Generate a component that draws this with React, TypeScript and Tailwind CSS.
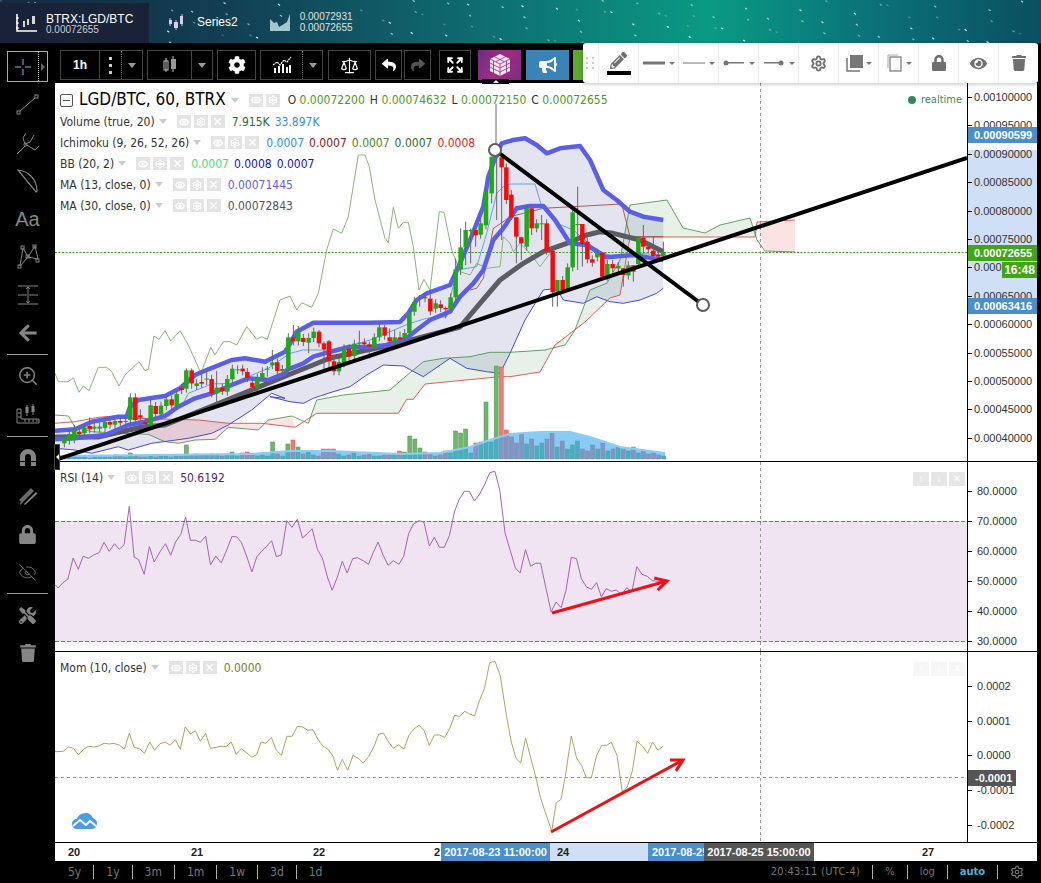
import { Eye, EyeOff, Expand, Scale, Settings, X, ZoomIn } from "lucide-react";
import { FaArrowLeft, FaBullhorn, FaCog, FaEye, FaLock, FaPencilAlt, FaReply, FaShare, FaTools, FaTrash } from "react-icons/fa";
import type { ReactNode } from "react";

type Pt = [number, number];

// points were read off crops of the chart, so convert them back to page pixels
const crop = (ox: number, oy: number, flat: number[], sx = 3, sy = 3): Pt[] => {
  const out: Pt[] = [];
  for (let i = 0; i < flat.length; i += 2) out.push([ox + flat[i] / sx, oy + flat[i + 1] / sy]);
  return out;
};
const line = (p: Pt[]) => p.map(([x, y]) => `${x.toFixed(1)},${y.toFixed(1)}`).join(" ");

// ─── Chart data ────────────────────────────────────────────────────────────

const bbUpper = [
  ...crop(55, 310, [0, 362, 60, 358, 110, 335, 190, 320, 215, 320, 225, 290, 250, 270, 330, 258, 375, 235, 420, 195, 460, 178, 530, 150, 570, 145, 630, 155, 690, 125]),
  ...crop(270, 150, [55, 590, 80, 545, 130, 518, 200, 518, 300, 518, 390, 516, 415, 490, 440, 450, 470, 430, 540, 405, 570, 340, 600, 270, 640, 170]),
  ...crop(400, 120, [265, 170, 285, 115, 305, 70, 340, 60, 375, 55, 410, 75, 440, 100, 480, 85, 540, 78, 570, 120, 610, 210, 650, 240, 690, 275, 730, 290, 790, 300]),
];
const bbLower = [
  ...crop(55, 340, [0, 325, 60, 330, 110, 340, 190, 320, 220, 330, 290, 310, 400, 295, 470, 280, 520, 255, 590, 210, 650, 160, 690, 175]),
  ...crop(270, 150, [0, 740, 60, 755, 100, 760, 130, 745, 180, 728, 240, 710, 290, 675, 340, 645, 400, 648, 460, 680, 540, 625, 590, 655, 650, 665, 690, 670, 720, 610]),
  ...crop(400, 120, [375, 600, 430, 510, 470, 505, 490, 540, 550, 550, 590, 530, 630, 545, 670, 550, 720, 540, 770, 520, 790, 505]),
];
const ma13 = [
  ...crop(55, 310, [0, 388, 60, 385, 150, 375, 220, 345, 270, 335, 330, 318, 370, 290, 420, 265, 470, 250, 530, 225, 580, 205, 640, 210, 690, 190]),
  ...crop(270, 150, [50, 660, 100, 640, 130, 620, 170, 608, 210, 598, 240, 590, 300, 592, 350, 585, 410, 565, 440, 540, 480, 510, 540, 485, 570, 440, 610, 400, 640, 360, 670, 270]),
  ...crop(400, 120, [310, 325, 350, 265, 390, 258, 430, 258, 465, 300, 510, 370, 560, 375, 620, 412, 700, 405, 790, 420]),
];
const ma30: Pt[] = [
  [55, 437], [98, 437], [142, 427], [165, 425], [222, 402], [293, 373], [313, 365], [330, 358], [400, 343], [460, 327],
  ...crop(400, 120, [240, 550, 300, 480, 370, 430, 430, 395, 500, 370, 560, 345, 600, 335, 640, 340, 720, 360, 790, 395]),
];
const spanA = [
  ...crop(55, 340, [0, 225, 40, 228, 60, 262, 110, 275, 200, 280, 280, 283, 330, 305, 370, 310, 420, 300, 480, 298, 520, 262, 610, 270, 640, 240, 710, 228, 760, 250]),
  ...crop(270, 150, [140, 750, 220, 735, 360, 720, 400, 685, 460, 635, 520, 625, 600, 620, 660, 607, 720, 607]),
  [545, 350], [565, 345], [575, 330], [590, 290], [607, 283], [620, 260], [630, 205], [667, 200], [683, 228], [705, 233], [720, 225], [750, 218], [757, 240], [765, 251], [795, 252],
] as Pt[];
const spanB = [
  ...crop(55, 340, [0, 250, 60, 245, 130, 232, 180, 228, 240, 235, 430, 240, 520, 250, 620, 250, 720, 262]),
  ...crop(270, 150, [140, 790, 385, 790, 410, 748, 430, 748, 465, 702, 640, 685, 690, 680, 720, 680]),
  [540, 372], [555, 345], [585, 322], [610, 298], [620, 295], [630, 237], [755, 237], [757, 222], [795, 220],
] as Pt[];
const kijun = [
  ...crop(270, 150, [600, 420, 620, 415, 640, 385, 670, 235, 690, 222]),
  ...crop(400, 120, [330, 290, 430, 265, 665, 252, 690, 350, 790, 350]),
];
const tenkan = [
  ...crop(55, 310, [340, 320, 385, 280, 400, 250, 470, 222, 530, 220, 580, 200, 640, 175]),
  ...crop(270, 150, [60, 610, 100, 600, 200, 600, 300, 570, 420, 520, 470, 505, 530, 500, 540, 450, 560, 360, 620, 350, 650, 250, 680, 130, 700, 110]),
  ...crop(400, 120, [330, 192, 405, 192, 425, 260, 470, 310, 520, 330, 590, 390, 640, 410, 720, 400, 790, 405]),
];
const lagging = [
  ...crop(55, 310, [0, 190, 10, 215, 40, 215, 55, 203, 72, 247, 85, 228, 102, 242, 130, 172, 155, 172, 170, 185, 192, 228, 210, 195, 252, 155, 270, 182, 280, 178, 297, 78, 312, 88, 330, 62, 347, 93, 375, 62, 400, 105, 438, 190, 467, 112, 480, 135, 505, 95, 525, 95, 545, 105, 575, 50, 605, 88, 620, 80, 637, 88, 665, 0]),
  ...crop(270, 150, [30, 450, 60, 438, 80, 480, 95, 458, 125, 472, 145, 430, 170, 300, 190, 237, 215, 250, 235, 200, 265, 15, 285, 15, 298, 50, 315, 150, 345, 265, 355, 278, 370, 172, 385, 235, 400, 217, 415, 217, 430, 290, 447, 420, 462, 388, 480, 420, 508, 185, 522, 187, 545, 300, 570, 365, 600, 375, 620, 340, 650, 355, 690, 350, 700, 260, 720, 280]),
  ...crop(400, 120, [340, 395, 360, 370, 390, 400, 420, 440, 450, 400]),
];
const volumeMa: Pt[] = [[55, 456], [150, 455], [250, 454], [290, 451], [330, 451], [400, 454], [440, 453], [470, 447], [490, 440], [510, 434], [540, 432], [570, 432], [590, 437], [620, 447], [665, 453]];

// [x, bodyTop, bodyBottom, up, high?, low?] in crop pixels
type Raw = [number, number, number, number, number?, number?];
const candles9: Raw[] = [
  [28, 385, 400, 1], [43, 372, 392, 1], [58, 357, 388, 1], [73, 365, 372, 0, 357, 390], [88, 352, 370, 1], [104, 348, 358, 0, 322, 370], [118, 350, 356, 1], [134, 350, 356, 1],
  [150, 336, 354, 1], [165, 336, 344, 0], [180, 333, 344, 1], [196, 333, 338, 0], [212, 333, 335, 1], [226, 262, 330, 1], [241, 262, 330, 0], [256, 316, 323, 0, 298, 335],
  [271, 336, 342, 0], [287, 286, 347, 1, 262, 350], [302, 288, 312, 0], [318, 287, 313, 1], [334, 268, 288, 1], [350, 268, 286, 0], [365, 252, 288, 1], [380, 234, 240, 0],
  [394, 181, 236, 1, 175], [410, 181, 220, 0, 175, 236], [425, 220, 228, 1], [440, 216, 221, 0, 180], [455, 206, 208, 1, 180, 225], [470, 207, 250, 0], [485, 233, 250, 1, 183, 283], [502, 233, 243, 0],
  [517, 207, 245, 1], [532, 176, 208, 1], [548, 178, 180, 1], [563, 176, 184, 0], [577, 186, 204, 0], [592, 218, 232, 0], [607, 203, 233, 1], [622, 189, 204, 1, 172],
  [637, 176, 178, 1, 168, 200], [652, 157, 166, 1, 120], [667, 157, 183, 0], [682, 177, 184, 1],
];
const candles10: Raw[] = [
  [55, 562, 656, 1], [70, 562, 574, 0, 525], [85, 544, 574, 1, 528], [100, 564, 576, 0], [116, 564, 578, 1, 550, 610], [131, 545, 564, 1], [147, 545, 580, 0, 540], [162, 580, 598, 0, 575, 660],
  [177, 574, 634, 0, 570, 660], [192, 634, 664, 0], [207, 636, 664, 1], [222, 595, 640, 1], [237, 596, 620, 0], [253, 581, 618, 1], [268, 578, 581, 1, 542], [283, 577, 583, 0],
  [298, 583, 590, 0, 575, 625], [313, 562, 592, 1], [328, 532, 562, 1], [344, 532, 557, 0, 525], [359, 562, 574, 0, 535], [374, 562, 574, 1, 540], [390, 562, 568, 0, 545], [404, 549, 562, 1],
  [418, 487, 550, 1], [433, 457, 485, 1, 440], [449, 440, 443, 1, 435, 470], [465, 442, 445, 0], [481, 446, 484, 0], [497, 460, 476, 1], [512, 463, 474, 0], [527, 474, 478, 0, 470, 505],
  [542, 442, 476, 1], [557, 358, 442, 1, 325], [572, 292, 358, 1, 235, 375], [587, 240, 292, 1, 215, 345], [602, 240, 243, 1, 235, 340], [617, 240, 256, 0, 235, 290], [632, 220, 254, 1, 205], [648, 125, 226, 1],
];
const candles4: Raw[] = [
  [275, 110, 220, 1, 123, 250], [290, 105, 112, 1, 100, 300], [305, 112, 142, 0, 112, 360], [319, 142, 240, 0], [334, 224, 292, 0, 210, 300], [349, 292, 350, 0, 290, 430], [364, 352, 370, 0, 350, 420], [380, 265, 380, 1],
  [395, 265, 325, 0, 265, 345], [410, 310, 325, 1], [425, 310, 312, 1, 285, 360], [440, 310, 392, 0], [458, 392, 517, 0, 392, 560], [472, 480, 515, 1, 480, 560], [488, 480, 510, 0], [503, 442, 510, 1, 430, 510],
  [518, 277, 442, 1], [533, 312, 315, 1, 200, 450], [547, 312, 372, 0, 312, 440], [562, 365, 418, 0], [577, 418, 428, 0], [592, 398, 412, 1], [607, 398, 470, 0, 400, 470], [622, 432, 470, 1],
  [638, 432, 445, 0], [655, 438, 445, 1], [670, 445, 465, 0, 445, 500], [685, 436, 466, 1], [700, 436, 455, 0, 436, 485], [715, 353, 432, 1, 353, 440], [730, 353, 380, 0, 315, 400], [745, 380, 388, 0],
  [760, 392, 408, 0, 350, 410], [775, 404, 410, 0, 380, 415], [790, 396, 410, 1, 365, 410],
];
const toCandles = (list: Raw[], ox: number, oy: number) =>
  list.map(([x, top, bot, up, hi, lo]) => ({
    x: ox + x / 3,
    top: oy + top / 3,
    bot: oy + bot / 3,
    up: up === 1,
    hi: oy + (hi ?? top - 12) / 3,
    lo: oy + (lo ?? bot + 12) / 3,
  }));
const candles = [...toCandles(candles9, 55, 310), ...toCandles(candles10, 270, 150), ...toCandles(candles4, 400, 120)];

const volumes = [
  2, 2, 2, 3, 2, 2, 1, 2, 2, 2, 2, 4, 3, 2, 6, 3, 2, 2, 4, 2, 3, 3, 2, 3, 3, 14, 4, 5, 4, 4, 5, 4, 3, 5, 7, 3, 6, 7, 4, 3,
  4, 3, 17, 5, 3, 15, 19, 12, 5, 8, 4, 3, 10, 10, 10, 5, 3, 4, 6, 3, 4, 5, 3, 3, 4, 4, 5, 8, 7, 23, 20, 11, 7, 5, 3, 4, 8, 6, 28, 26,
  30, 6, 16, 17, 57, 17, 93, 92, 29, 22, 16, 25, 15, 20, 13, 16, 20, 26, 12, 18, 10, 14, 18, 10, 8, 14, 10, 16, 8, 10, 12, 10, 8, 12, 6, 9, 5, 6, 4, 3,
];

const rsi = crop(55, 462, [
  0, 368, 8, 378, 20, 362, 32, 351, 45, 288, 58, 322, 70, 283, 84, 289, 96, 279, 110, 272, 122, 241, 135, 268, 148, 245, 160, 262, 172, 248, 185, 133, 197, 285, 208, 293, 222, 337, 235, 254, 247, 300, 262, 268, 275, 245, 288, 280, 300, 240, 313, 217, 325, 165, 337, 235, 350, 235, 362, 241, 375, 223, 387, 309, 400, 282, 414, 303, 428, 262, 440, 224, 452, 224, 464, 241, 477, 282, 490, 330, 502, 285, 514, 268, 526, 254, 539, 236, 551, 284, 563, 279, 577, 176, 590, 196, 603, 172, 616, 228, 628, 215, 640, 200, 653, 262, 666, 290, 678, 345, 690, 385, 703, 345, 715, 298, 727, 333, 741, 290, 753, 287, 767, 296, 780, 307, 792, 272, 804, 240, 817, 280, 829, 310, 842, 296, 856, 307, 868, 283, 880, 215, 892, 186, 906, 176, 918, 180, 932, 252, 944, 226, 957, 256, 969, 256, 982, 220, 994, 150, 1006, 112, 1019, 88, 1031, 88, 1044, 117, 1057, 96, 1070, 66, 1082, 32, 1095, 28, 1107, 85, 1120, 212, 1133, 265, 1146, 318, 1158, 333, 1171, 263, 1184, 313, 1196, 304, 1209, 304, 1222, 380, 1235, 450, 1247, 420, 1260, 437, 1272, 385, 1285, 286, 1298, 290, 1310, 350, 1323, 375, 1335, 382, 1348, 362, 1360, 405, 1372, 380, 1385, 388, 1397, 384, 1410, 398, 1423, 377, 1436, 390, 1448, 314, 1461, 337, 1474, 343, 1487, 356, 1500, 358, 1512, 358,
], 2.489);
const momentum = crop(55, 652, [
  0, 299, 20, 298, 33, 285, 45, 289, 57, 308, 70, 292, 83, 283, 95, 285, 107, 282, 120, 274, 133, 276, 145, 274, 158, 280, 170, 292, 182, 244, 194, 286, 207, 290, 219, 304, 232, 270, 244, 295, 257, 275, 270, 270, 282, 280, 295, 263, 307, 292, 319, 225, 332, 246, 344, 236, 356, 268, 369, 244, 381, 289, 394, 286, 407, 283, 419, 284, 432, 270, 444, 307, 457, 290, 470, 303, 482, 316, 494, 308, 505, 270, 517, 274, 530, 256, 542, 294, 555, 310, 568, 253, 581, 253, 594, 223, 607, 225, 619, 235, 632, 233, 644, 262, 657, 283, 669, 292, 681, 313, 692, 355, 704, 322, 717, 355, 730, 310, 743, 319, 755, 333, 768, 314, 781, 285, 793, 246, 805, 244, 817, 270, 829, 289, 842, 278, 855, 292, 867, 250, 880, 230, 892, 220, 904, 235, 917, 280, 930, 249, 942, 249, 955, 256, 967, 230, 979, 190, 991, 193, 1004, 178, 1016, 186, 1028, 192, 1040, 145, 1052, 110, 1065, 32, 1078, 28, 1091, 72, 1106, 190, 1118, 270, 1130, 320, 1141, 333, 1153, 258, 1166, 320, 1178, 376, 1190, 440, 1204, 490, 1217, 538, 1228, 452, 1240, 442, 1252, 360, 1265, 252, 1278, 318, 1290, 340, 1302, 377, 1314, 378, 1327, 310, 1340, 280, 1352, 280, 1363, 271, 1377, 310, 1390, 420, 1402, 405, 1414, 360, 1426, 268, 1439, 282, 1452, 304, 1464, 270, 1477, 295, 1489, 283,
], 2.45);

const priceTicks = ["0.00100000", "0.00095000", "0.00090000", "0.00085000", "0.00080000", "0.00075000", "0.00070000", "0.00065000", "0.00060000", "0.00055000", "0.00050000", "0.00045000", "0.00040000"];

// ─── Small parts ───────────────────────────────────────────────────────────

function Caret({ className = "border-x-[4px] border-t-[5px] border-t-[#bbb]" }: { className?: string }) {
  return <span className={`inline-block h-0 w-0 border-x-transparent ${className}`} />;
}
const tinyCaret = "border-x-[3px] border-t-[3px] border-t-[#777]";
const toolCaret = "border-x-[4px] border-t-[5px] border-t-[#999]";
const legendCaret = "border-x-[4px] border-t-[5px] border-t-[#ccc]";

function LegendButtons({ close = true }: { close?: boolean }) {
  const cell = "flex h-[13px] w-[14px] items-center justify-center bg-[#e4e4e4] text-white";
  return (
    <span className="flex gap-[3px]">
      <span className={cell}><Eye size={10} strokeWidth={3} /></span>
      <span className={cell}><Settings size={10} strokeWidth={3} /></span>
      {close && <span className={cell}><X size={11} strokeWidth={3} /></span>}
    </span>
  );
}

function LegendRow({ name, values }: { name: string; values: [string, string][] }) {
  return (
    <div className="flex h-[21px] items-center">
      <span className="mr-[4px]">{name}</span>
      <span className="mr-[10px] flex"><Caret className={legendCaret} /></span>
      <LegendButtons />
      <span className="ml-[7px] flex gap-[5px]">
        {values.map(([v, c], i) => (
          <span key={i} style={{ color: c }}>{v}</span>
        ))}
      </span>
    </div>
  );
}

function Seg({ w, dotted, solid, children }: { w: string; dotted?: boolean; solid?: boolean; children: ReactNode }) {
  return (
    <div className={`flex h-full items-center justify-center ${w} ${dotted ? "border-l border-dotted border-[#777]" : ""} ${solid ? "border-l border-[#444]" : ""}`}>
      {children}
    </div>
  );
}

function Group({ children, className = "" }: { children: ReactNode; className?: string }) {
  return <div className={`flex h-[30px] border border-[#444] text-white ${className}`}>{children}</div>;
}

function Side({ children, h = "h-[38px]" }: { children: ReactNode; h?: string }) {
  return <div className={`flex w-full items-center justify-center text-[#858585] ${h}`}>{children}</div>;
}

const SideRule = () => <div className="mx-[7px] my-[2px] h-px w-[41px] bg-[#999]" />;

function Axis({ children }: { children: ReactNode }) {
  return <div className="relative h-full w-[70px] overflow-hidden border-l border-black bg-white font-['Liberation_Sans',sans-serif] text-[11px] text-[#333]">{children}</div>;
}

function AxisTick({ y, label, left = "left-[6px]" }: { y: number; label: string; left?: string }) {
  return (
    <>
      <div className="absolute left-0 h-px w-[4px] bg-black" style={{ top: y }} />
      <div className={`absolute leading-[14px] ${left}`} style={{ top: y - 7 }}>{label}</div>
    </>
  );
}

function PriceFlag({ top, bg, children }: { top: string; bg: string; children: ReactNode }) {
  return <div className={`absolute inset-x-0 h-[16px] pl-[6px] text-[11px] font-bold leading-[16px] text-white ${top} ${bg}`}>{children}</div>;
}

function TrendArrow({ x1, y1, x2, y2 }: { x1: number; y1: number; x2: number; y2: number }) {
  const a = Math.atan2(y2 - y1, x2 - x1);
  const head = (d: number) => `${x2 - 13 * Math.cos(a + d)},${y2 - 13 * Math.sin(a + d)}`;
  return (
    <g fill="none" stroke="#ee1016" strokeWidth="3">
      <line x1={x1} y1={y1} x2={x2} y2={y2} />
      <polyline points={`${head(0.5)} ${x2},${y2} ${head(-0.5)}`} />
    </g>
  );
}

const stars = Array.from({ length: 120 }, (_, i) => ({
  x: (i * 379.7 + (i % 7) * 31) % 1041,
  y: (i * 23.3 + (i % 5) * 9) % 43,
  o: 0.25 + ((i * 13) % 7) / 9,
})).filter((s) => s.x < 290 || s.x > 360);

// ─── Top ───────────────────────────────────────────────────────────────────

function TopTabs() {
  return (
    <div className="relative flex h-[43px] overflow-hidden bg-[linear-gradient(90deg,#142a40_0%,#123f52_22%,#0f6a70_45%,#0a9a83_68%,#0b6f78_85%,#0a4f60_100%)] font-['Liberation_Sans',sans-serif]">
      <svg className="absolute inset-0" width="1041" height="43" viewBox="0 0 1041 43">
        {stars.map((s, i) => (
          <line key={i} x1={s.x} y1={s.y} x2={s.x + 2} y2={s.y + 1.4} stroke="#dff" strokeOpacity={s.o} strokeWidth="1.2" />
        ))}
      </svg>
      <div className="relative mt-[3px] flex w-[149px] items-center bg-[#1a2238] pl-[16px]">
        <svg width="22" height="20" viewBox="0 0 22 20" className="mr-[8px]">
          <path d="M1 1v17h20" fill="none" stroke="#fff" strokeWidth="1.6" />
          <path d="M0 5h3M0 10h3M0 15h3" stroke="#fff" />
          <path d="M7 8h2v6H7zM11 6h2v6h-2zM16 3h3v8h-3z" fill="#d8d8d8" />
        </svg>
        <div className="flex flex-col text-white">
          <span className="text-[12px] leading-[12px]">BTRX:LGD/BTC</span>
          <span className="text-[10px] leading-[9px] text-[#ccc]">0.00072655</span>
        </div>
      </div>
      <div className="relative flex items-center pl-[19px] text-[12px] text-white">
        <svg width="16" height="18" viewBox="0 0 16 18" className="mr-[13px]">
          <path d="M2 5v8M8 7v10M14 1v12" stroke="#bcd" />
          <path d="M1 7h3v4H1zM6 9h4v6H6zM12 3h3v8h-3z" fill="#dce" />
        </svg>
        Series2
      </div>
      <div className="relative flex items-center pl-[32px] text-[10px] leading-[11px] text-[#e0e0e0]">
        <svg width="22" height="18" viewBox="0 0 22 18" className="mr-[8px]">
          <path d="M0 6l4 4 3-1 2 5 5-3 3-2 3-8v17H0z" fill="#9fc9cc" />
        </svg>
        <div className="flex flex-col">
          <span>0.00072931</span>
          <span>0.00072655</span>
        </div>
      </div>
    </div>
  );
}

function TopToolbar() {
  return (
    <div className="flex h-[40px] items-start gap-[4px] pl-[5px] pt-[7px] font-['Liberation_Sans',sans-serif]">
      <Group>
        <Seg w="w-[38px]"><span className="text-[12px] font-bold">1h</span></Seg>
        <Seg w="w-[22px]" solid>
          <span className="flex flex-col gap-[4px]">
            <i className="block h-[3px] w-[3px] bg-[#ccc]" />
            <i className="block h-[3px] w-[3px] bg-[#ccc]" />
            <i className="block h-[3px] w-[3px] bg-[#ccc]" />
          </span>
        </Seg>
        <Seg w="w-[21px]" dotted><Caret className={toolCaret} /></Seg>
      </Group>
      <Group>
        <Seg w="w-[43px]">
          <svg width="16" height="20" viewBox="0 0 16 20">
            <path d="M4 3v14M11 1v16" stroke="#bbb" />
            <rect x="2" y="6" width="4" height="9" fill="none" stroke="#bbb" />
            <rect x="9" y="4" width="5" height="10" fill="#999" />
          </svg>
        </Seg>
        <Seg w="w-[21px]" solid><Caret className={toolCaret} /></Seg>
      </Group>
      <Group><Seg w="w-[37px]"><FaCog size={18} /></Seg></Group>
      <Group>
        <Seg w="w-[41px]">
          <svg width="20" height="18" viewBox="0 0 20 18">
            <path d="M1 9l4-3 3 3 4-5 3 2 4-5" fill="none" stroke="#fff" strokeWidth="1.2" strokeDasharray="2 .7" />
            <path d="M2 12h2v5H2zM6 10h2v7H6zM10 8h2v9h-2zM14 11h2v6h-2zM17 9h2v8h-2z" fill="#fff" />
          </svg>
        </Seg>
        <Seg w="w-[20px]" dotted><Caret className={toolCaret} /></Seg>
      </Group>
      <Group className="ml-[1px]"><Seg w="w-[41px]"><Scale size={19} strokeWidth={1.5} /></Seg></Group>
      <Group><Seg w="w-[25px]"><FaReply size={14} /></Seg></Group>
      <Group className="-ml-[2px]"><Seg w="w-[25px]"><span className="text-[#555]"><FaShare size={14} /></span></Seg></Group>
      <Group className="ml-[4px]"><Seg w="w-[30px]"><Expand size={18} strokeWidth={2.4} /></Seg></Group>
      <div className="ml-[3px] flex h-[30px] w-[43px] items-center justify-center bg-[linear-gradient(120deg,#6c2f7e,#a12b83_50%,#7b2e80)]">
        <svg width="22" height="24" viewBox="0 0 22 24">
          <path d="M11 1l10 5v12l-10 5-10-5V6z" fill="#f6e6f1" />
          <path d="M1 6l10 5 10-5M11 11v12M5 3.5L15 8.5M17 3.5L7 8.5M1 10l10 5 10-5M1 14l10 5 10-5M4.5 8v12M17.5 8v12" fill="none" stroke="#a23a88" strokeWidth="0.9" />
        </svg>
      </div>
      <div className="ml-[1px] flex h-[30px] w-[43px] items-center justify-center bg-[#3a84b5] text-white"><FaBullhorn size={18} /></div>
      <div className="h-[30px] w-[10px] bg-[#5aa92c]" />
    </div>
  );
}

function DrawCell({ children }: { children: ReactNode }) {
  return <div className="flex h-full w-[40px] items-center justify-center border-l border-[#efefef] text-[#6f6f6f]">{children}</div>;
}

function LineStyle({ d }: { d: ReactNode }) {
  return (
    <span className="flex items-center gap-[3px]">
      <svg width="24" height="10" viewBox="0 0 24 10">{d}</svg>
      <Caret className={tinyCaret} />
    </span>
  );
}

function DrawingToolbar() {
  return (
    <div className="absolute left-[583px] top-[43px] flex h-[40px] w-[455px] items-center rounded-[3px] bg-white shadow-[0_1px_4px_rgba(0,0,0,0.25)]">
      <div className="grid w-[15px] grid-cols-2 justify-center gap-[3px] px-[3px]">
        {[0, 1, 2, 3, 4, 5].map((i) => <i key={i} className="block h-[2px] w-[2px] bg-[#ccc]" />)}
      </div>
      <DrawCell>
        <span className="flex flex-col items-center gap-[2px]">
          <FaPencilAlt size={17} />
          <i className="block h-[4px] w-[24px] bg-black" />
        </span>
      </DrawCell>
      <DrawCell><LineStyle d={<rect x="1" y="3.5" width="22" height="3" fill="#777" />} /></DrawCell>
      <DrawCell><LineStyle d={<rect x="1" y="4.5" width="22" height="1" fill="#777" />} /></DrawCell>
      <DrawCell><LineStyle d={<><circle cx="4" cy="5" r="2.5" fill="#777" /><rect x="4" y="4" width="18" height="1.5" fill="#777" /></>} /></DrawCell>
      <DrawCell><LineStyle d={<><circle cx="19" cy="5" r="2.5" fill="#777" /><rect x="2" y="4" width="18" height="1.5" fill="#777" /></>} /></DrawCell>
      <DrawCell><Settings size={17} strokeWidth={2.6} /></DrawCell>
      <DrawCell>
        <span className="flex items-center gap-[2px]">
          <svg width="18" height="18" viewBox="0 0 18 18">
            <rect x="4" y="1" width="13" height="13" fill="#777" />
            <path d="M1 4v13h13" fill="none" stroke="#777" strokeWidth="1.5" />
          </svg>
          <Caret className={tinyCaret} />
        </span>
      </DrawCell>
      <DrawCell>
        <span className="flex items-center gap-[2px]">
          <svg width="18" height="18" viewBox="0 0 18 18">
            <rect x="4" y="3" width="11" height="14" fill="#fff" stroke="#777" strokeWidth="1.2" />
            <path d="M2 14V1h10" fill="none" stroke="#aaa" />
          </svg>
          <Caret className={tinyCaret} />
        </span>
      </DrawCell>
      <DrawCell><FaLock size={16} /></DrawCell>
      <DrawCell><FaEye size={17} /></DrawCell>
      <DrawCell><FaTrash size={16} /></DrawCell>
    </div>
  );
}

// ─── Left tools ────────────────────────────────────────────────────────────

function LeftToolbar() {
  const thin = { fill: "none", stroke: "#858585", strokeWidth: 1 };
  return (
    <div className="flex w-[55px] shrink-0 flex-col items-center pt-[8px]">
      <div className="mb-[4px] flex h-[31px] w-[41px] items-center border border-[#aaa]">
        <div className="flex h-full w-[30px] items-center justify-center">
          <svg width="18" height="18" viewBox="0 0 18 18">
            <path d="M9 1v6M9 11v6M1 9h6M11 9h6" stroke="#62c8dc" strokeWidth="1" />
          </svg>
        </div>
        <div className="flex h-full flex-1 items-center justify-center border-l border-dotted border-[#ccc]">
          <span className="h-0 w-0 border-y-[4px] border-l-[4px] border-y-transparent border-l-[#666]" />
        </div>
      </div>
      <Side>
        <svg width="24" height="22" viewBox="0 0 24 22" {...thin}>
          <rect x="1" y="17" width="3" height="3" /><rect x="19" y="1" width="3" height="3" /><path d="M4 17L19 4" />
        </svg>
      </Side>
      <Side>
        <svg width="24" height="24" viewBox="0 0 24 24" {...thin}>
          <path d="M1 23l8-8M9 13l10 6 4-4M9 13L7 7l3-5M9 13l5-2 4-7" />
          <circle cx="9.5" cy="13.5" r="1.5" />
        </svg>
      </Side>
      <Side>
        <svg width="22" height="24" viewBox="0 0 22 24" {...thin} strokeWidth={1.2}>
          <path d="M1 1c9 1 19 8 19 21 0 1 0 1-1 1L1 1z" />
        </svg>
      </Side>
      <Side><span className="font-['Liberation_Sans',sans-serif] text-[20px] text-[#858585]">Aa</span></Side>
      <Side>
        <svg width="24" height="26" viewBox="0 0 24 26" {...thin}>
          <path d="M4 22L7 4l5 9 7-11 3 13-10-2-8 9" />
          <rect x="2" y="21" width="3" height="3" /><rect x="5" y="2" width="3" height="3" /><rect x="10" y="11" width="3" height="3" /><rect x="17" y="1" width="3" height="3" /><rect x="20" y="15" width="3" height="3" />
        </svg>
      </Side>
      <Side>
        <svg width="22" height="22" viewBox="0 0 22 22" {...thin}>
          <path d="M1 2h20M1 11h20M1 20h20M11 3v7M11 12v7M9 5l2-2 2 2M9 17l2 2 2-2" />
        </svg>
      </Side>
      <Side><FaArrowLeft size={20} /></Side>
      <SideRule />
      <Side><ZoomIn size={22} strokeWidth={1.6} /></Side>
      <Side>
        <svg width="24" height="20" viewBox="0 0 24 20">
          <path d="M1 5v14h22v-4H5V5z" fill="none" stroke="#858585" />
          <path d="M2 9h3M2 13h3M9 15v3M13 15v3M17 15v3M21 15v3" stroke="#858585" />
          <path d="M11 1v11M17 0v11" stroke="#858585" />
          <rect x="9.5" y="3" width="3" height="6" fill="#858585" /><rect x="15.5" y="2" width="3" height="6" fill="#858585" />
        </svg>
      </Side>
      <div className="mt-[1px]"><SideRule /></div>
      <Side>
        <svg width="16" height="18" viewBox="0 0 16 18">
          <path d="M0 17V8a8 8 0 0 1 16 0v9h-5V8a3 3 0 0 0-6 0v9z" fill="#858585" />
          <path d="M0 12.5h5M11 12.5h5" stroke="#000" />
        </svg>
      </Side>
      <Side>
        <svg width="20" height="20" viewBox="0 0 20 20">
          <path d="M1 14L13 2l3 3L4 17zM5 16l-3 3 .5-3z" fill="#6a6a6a" />
          <path d="M6 18L18 6l1.5 1.5L7 19z" fill="#858585" />
        </svg>
      </Side>
      <Side><FaLock size={19} /></Side>
      <Side><EyeOff size={19} strokeWidth={1} /></Side>
      <SideRule />
      <Side><FaTools size={17} /></Side>
      <Side><FaTrash size={18} /></Side>
    </div>
  );
}

// ─── Panes ─────────────────────────────────────────────────────────────────

function MainPlot() {
  const cloudTop = spanA.filter(([x]) => x > 308 && x <= 757);
  const cloudBottom = spanB.filter(([x]) => x > 308 && x <= 757).reverse();
  const pinkA = spanA.filter(([x]) => x > 130 && x < 300);
  const pinkB = spanB.filter(([x]) => x > 130 && x < 300).reverse();
  return (
    <svg className="absolute inset-0" width="912" height="378" viewBox="55 83 912 378">
      <polygon points={line([...bbUpper, ...[...bbLower].reverse()])} fill="#5a5fa8" fillOpacity="0.17" />
      <polygon points={line([...cloudTop, ...cloudBottom])} fill="#3d8f3d" fillOpacity="0.12" />
      <polygon points={line([...pinkA, ...pinkB])} fill="#f05a5a" fillOpacity="0.17" />
      <polygon points="757,222 795,220 795,252 765,251" fill="#f05a5a" fillOpacity="0.17" />
      <line x1="55" y1="252.5" x2="967" y2="252.5" stroke="#3d9a1c" strokeDasharray="2 1.5" />
      <line x1="760.5" y1="83" x2="760.5" y2="461" stroke="#999" strokeDasharray="3 3" />
      <line x1="496" y1="104" x2="496" y2="146" stroke="#666" />

      <polyline points={line(lagging)} fill="none" stroke="#8fb37a" />
      <polyline points={line(spanA)} fill="none" stroke="#3f8a44" strokeOpacity="0.8" />
      <polyline points={line(spanB)} fill="none" stroke="#d8453f" strokeOpacity="0.85" />
      <polyline points={line(kijun)} fill="none" stroke="#a03a3a" strokeOpacity="0.8" />
      <polyline points={line(tenkan)} fill="none" stroke="#5fa6e0" />
      <polyline points={line(bbLower)} fill="none" stroke="#4848d8" />

      {volumes.map((h, i) => {
        const x = 59.3 + i * 5.08;
        const c = candles.reduce((a, b) => (Math.abs(b.x - x) < Math.abs(a.x - x) ? b : a));
        return <rect key={i} x={x - 2} y={459 - h} width="4" height={h} fill={c.up ? "#6fb56f" : "#f27a7a"} stroke={c.up ? "#4e9a4e" : "#e05555"} strokeWidth="0.5" />;
      })}
      <polygon points={line([...volumeMa, [665, 459], [55, 459]])} fill="#38a8ee" fillOpacity="0.6" />
      <polyline points={line(volumeMa)} fill="none" stroke="#8ccdf5" strokeWidth="2" />

      <polyline points={line(ma30)} fill="none" stroke="#5c5c64" strokeWidth="5" strokeLinejoin="round" />
      <polyline points={line(bbUpper)} fill="none" stroke="#5b5ee6" strokeWidth="4.5" strokeLinejoin="round" />
      <polyline points={line(ma13)} fill="none" stroke="#5b5ee6" strokeWidth="4.5" strokeLinejoin="round" />

      {candles.map((c, i) => (
        <g key={i}>
          <line x1={c.x} y1={c.hi} x2={c.x} y2={c.lo} stroke="#666" />
          <rect x={c.x - 2.25} y={c.top} width="4.5" height={Math.max(c.bot - c.top, 1)} fill={c.up ? "#1fa81a" : "#f80a0a"} />
        </g>
      ))}

      <line x1="55" y1="460" x2="967" y2="158" stroke="#000" strokeWidth="4" />
      <line x1="495" y1="150" x2="703" y2="305" stroke="#000" strokeWidth="4" />
      <circle cx="495" cy="150" r="6" fill="#fff" stroke="#5c5c5c" strokeWidth="2" />
      <circle cx="703" cy="305" r="6" fill="#fff" stroke="#5c5c5c" strokeWidth="2" />
    </svg>
  );
}

function MainPane() {
  const ohlc: [string, string][] = [["O", "0.00072200"], ["H", "0.00074632"], ["L", "0.00072150"], ["C", "0.00072655"]];
  return (
    <div className="flex h-[379px] border-b border-black">
      <div className="relative w-[912px] bg-white">
        <MainPlot />
        <div className="absolute left-[5px] top-[6px] font-['DejaVu_Sans_Condensed','Noto_Sans',sans-serif] text-[12px] text-[#333]">
          <div className="flex h-[22px] items-center">
            <span className="mr-[6px] flex h-[13px] w-[13px] items-center justify-center rounded-[2px] border border-[#555]"><i className="block h-px w-[7px] bg-[#555]" /></span>
            <span className="mr-[5px] text-[17px] text-black">LGD/BTC, 60, BTRX</span>
            <span className="mr-[10px] flex"><Caret className={legendCaret} /></span>
            <LegendButtons close={false} />
            <span className="ml-[8px] flex gap-[5px]">
              {ohlc.map(([k, v]) => (
                <span key={k}>{k} <span className="text-[#4f9a1f]">{v}</span></span>
              ))}
            </span>
          </div>
          <LegendRow name="Volume (true, 20)" values={[["7.915K", "#2c6e2c"], ["33.897K", "#3a8fe0"]]} />
          <LegendRow name="Ichimoku (9, 26, 52, 26)" values={[["0.0007", "#2f8fe8"], ["0.0007", "#8b2020"], ["0.0007", "#4e8a2e"], ["0.0007", "#2c6e2c"], ["0.0008", "#e8202c"]]} />
          <LegendRow name="BB (20, 2)" values={[["0.0007", "#45e07a"], ["0.0008", "#1414c8"], ["0.0007", "#1414c8"]]} />
          <LegendRow name="MA (13, close, 0)" values={[["0.00071445", "#6a60e0"]]} />
          <LegendRow name="MA (30, close, 0)" values={[["0.00072843", "#555"]]} />
        </div>
        <div className="absolute right-[5px] top-[10px] flex items-center gap-[5px] font-['DejaVu_Sans_Condensed','Noto_Sans',sans-serif] text-[11px] leading-[14px] text-[#3a8a5f]">
          <i className="block h-[8px] w-[8px] rounded-full bg-[#2e8b57]" />realtime
        </div>
      </div>
      <Axis>
        <div className="absolute inset-x-0 top-[67px] h-[148px] bg-[#cfdff5]" />
        {priceTicks.map((p, i) => <AxisTick key={p} y={14 + i * 28.4} label={p} />)}
        <PriceFlag top="top-[44px]" bg="bg-[#4a8fc9]">0.00090599</PriceFlag>
        <PriceFlag top="top-[162px]" bg="bg-[#3fa714]">0.00072655</PriceFlag>
        <div className="absolute right-0 top-[179px] h-[16px] w-[35px] bg-[#3fa714] text-center text-[12px] font-bold leading-[16px] text-white">16:48</div>
        <PriceFlag top="top-[215px]" bg="bg-[#4a8fc9]">0.00063416</PriceFlag>
      </Axis>
    </div>
  );
}

function ScaleButtons({ bg }: { bg: string }) {
  const cell = `h-[14px] w-[16px] text-center ${bg}`;
  return (
    <div className="absolute right-[2px] top-[10px] flex gap-[2px] font-['Liberation_Sans',sans-serif] text-[10px] font-bold leading-[14px] text-white">
      <span className={cell}>↑</span>
      <span className={cell}>↓</span>
      <span className={cell}>×</span>
    </div>
  );
}

function RsiPane() {
  return (
    <div className="flex h-[190px] border-b border-black">
      <div className="relative w-[912px] bg-white">
        <svg className="absolute inset-0" width="912" height="189" viewBox="55 462 912 189">
          <rect x="55" y="521" width="912" height="120" fill="#f0e3f2" />
          <path d="M55 521.5h912M55 641.5h912" stroke="#777" strokeDasharray="4 2" />
          <line x1="760.5" y1="462" x2="760.5" y2="651" stroke="#999" strokeDasharray="3 3" />
          <polyline points={line(rsi)} fill="none" stroke="#a565ad" />
          <TrendArrow x1={552} y1={613} x2={667} y2={581} />
        </svg>
        <div className="absolute left-[5px] top-[5px] font-['DejaVu_Sans_Condensed','Noto_Sans',sans-serif] text-[12px] text-[#333]">
          <LegendRow name="RSI (14)" values={[["50.6192", "#5b1a6b"]]} />
        </div>
        <ScaleButtons bg="bg-[#e6e6e6]" />
      </div>
      <Axis>
        {["80.0000", "70.0000", "60.0000", "50.0000", "40.0000", "30.0000"].map((p, i) => (
          <AxisTick key={p} y={29 + i * 30} label={p} left="left-[9px]" />
        ))}
      </Axis>
    </div>
  );
}

function MomPane() {
  const ticks: [string, number][] = [["0.0002", 34], ["0.0001", 69], ["0.0000", 103], ["-0.0001", 138], ["-0.0002", 173]];
  return (
    <div className="flex h-[191px] border-b border-black">
      <div className="relative w-[912px] bg-white">
        <svg className="absolute inset-0" width="912" height="190" viewBox="55 652 912 190">
          <line x1="55" y1="777.5" x2="967" y2="777.5" stroke="#999" strokeDasharray="3 3" />
          <line x1="760.5" y1="652" x2="760.5" y2="842" stroke="#999" strokeDasharray="3 3" />
          <polyline points={line(momentum)} fill="none" stroke="#aaa860" />
          <TrendArrow x1={551} y1={832} x2={683} y2={760} />
          <path d="M72 824c0-3 2-5 5-5 1-4 5-6 9-6 3 0 6 2 7 5 3 1 4 3 4 5 0 3-2 6-5 6H77c-3 0-5-2-5-5z" fill="#4a9fe0" />
          <path d="M73 826l7-6 6 5 4-4 6 5" fill="none" stroke="#fff" strokeWidth="1.8" />
        </svg>
        <div className="absolute left-[5px] top-[5px] font-['DejaVu_Sans_Condensed','Noto_Sans',sans-serif] text-[12px] text-[#333]">
          <LegendRow name="Mom (10, close)" values={[["0.0000", "#7d7d2c"]]} />
        </div>
        <ScaleButtons bg="bg-[#f7f7f7]" />
      </div>
      <Axis>
        {ticks.map(([p, y]) => (
          <AxisTick key={p} y={y} label={p} left="left-[9px]" />
        ))}
        <div className="absolute left-0 top-[118px] h-[16px] w-[48px] bg-[#555] pl-[7px] text-[11px] font-bold leading-[16px] text-white">-0.0001</div>
      </Axis>
    </div>
  );
}

function TimeAxis() {
  const days: [string, number][] = [["20", 20], ["21", 143], ["22", 265], ["2", 386], ["24", 509], ["27", 874]];
  return (
    <div className="relative h-[18px] w-[982px] overflow-hidden whitespace-nowrap bg-white font-['Liberation_Sans',sans-serif] text-[11px] font-bold leading-[18px] text-[#222]">
      <div className="absolute left-[495px] top-0 h-full w-[98px] bg-[#cfdff5]" />
      {days.map(([d, x]) => (
        <span key={d} className="absolute" style={{ left: x - 7 }}>{d}</span>
      ))}
      <div className="absolute left-[386px] top-0 h-full w-[109px] overflow-hidden bg-[#4a8fc9] text-center text-white">2017-08-23 11:00:00</div>
      <div className="absolute left-[593px] top-0 h-full w-[56px] overflow-hidden bg-[#4a8fc9] pl-[4px] text-white">2017-08-25</div>
      <div className="absolute left-[649px] top-0 h-full w-[110px] overflow-hidden bg-[#555] text-center text-white">2017-08-25 15:00:00</div>
    </div>
  );
}

function BottomBar() {
  const Sep = () => <i className="block h-[14px] w-px bg-[#aaa]" />;
  const ranges = ["5y", "1y", "3m", "1m", "1w", "3d", "1d"];
  return (
    <div className="flex h-[22px] items-center justify-between pl-[68px] pr-[17px] font-['DejaVu_Sans_Condensed','Noto_Sans',sans-serif] text-[12px] text-[#777]">
      <div className="flex items-center gap-[12px]">
        {ranges.map((r, i) => (
          <span key={r} className="flex items-center gap-[12px]">
            {r}
            {i < ranges.length - 1 && <Sep />}
          </span>
        ))}
      </div>
      <div className="flex items-center gap-[12px] text-[11px]">
        <span className="tracking-[0.3px]">20:43:11 (UTC-4)</span>
        <Sep />
        <span>%</span>
        <Sep />
        <span>log</span>
        <Sep />
        <span className="font-bold text-[#4fb0dc]">auto</span>
        <Sep />
        <Settings size={14} />
      </div>
    </div>
  );
}

export default function App() {
  return (
    <div className="relative h-[883px] w-[1041px] overflow-hidden bg-black">
      <TopTabs />
      <div className="flex h-[818px]">
        <LeftToolbar />
        <div className="flex-1">
          <TopToolbar />
          <MainPane />
          <RsiPane />
          <MomPane />
          <TimeAxis />
        </div>
      </div>
      <BottomBar />
      <DrawingToolbar />
      {/* little collapse tabs sitting on the panes */}
      <div className="absolute left-[482px] top-[79px] flex h-[5px] w-[27px] items-center justify-center bg-black">
        <span className="h-0 w-0 border-x-[3px] border-b-[3px] border-x-transparent border-b-white" />
      </div>
      <div className="absolute left-[54px] top-[444px] flex h-[26px] w-[6px] items-center justify-center border border-[#444] bg-black">
        <span className="h-0 w-0 border-y-[3px] border-r-[3px] border-y-transparent border-r-white" />
      </div>
    </div>
  );
}
